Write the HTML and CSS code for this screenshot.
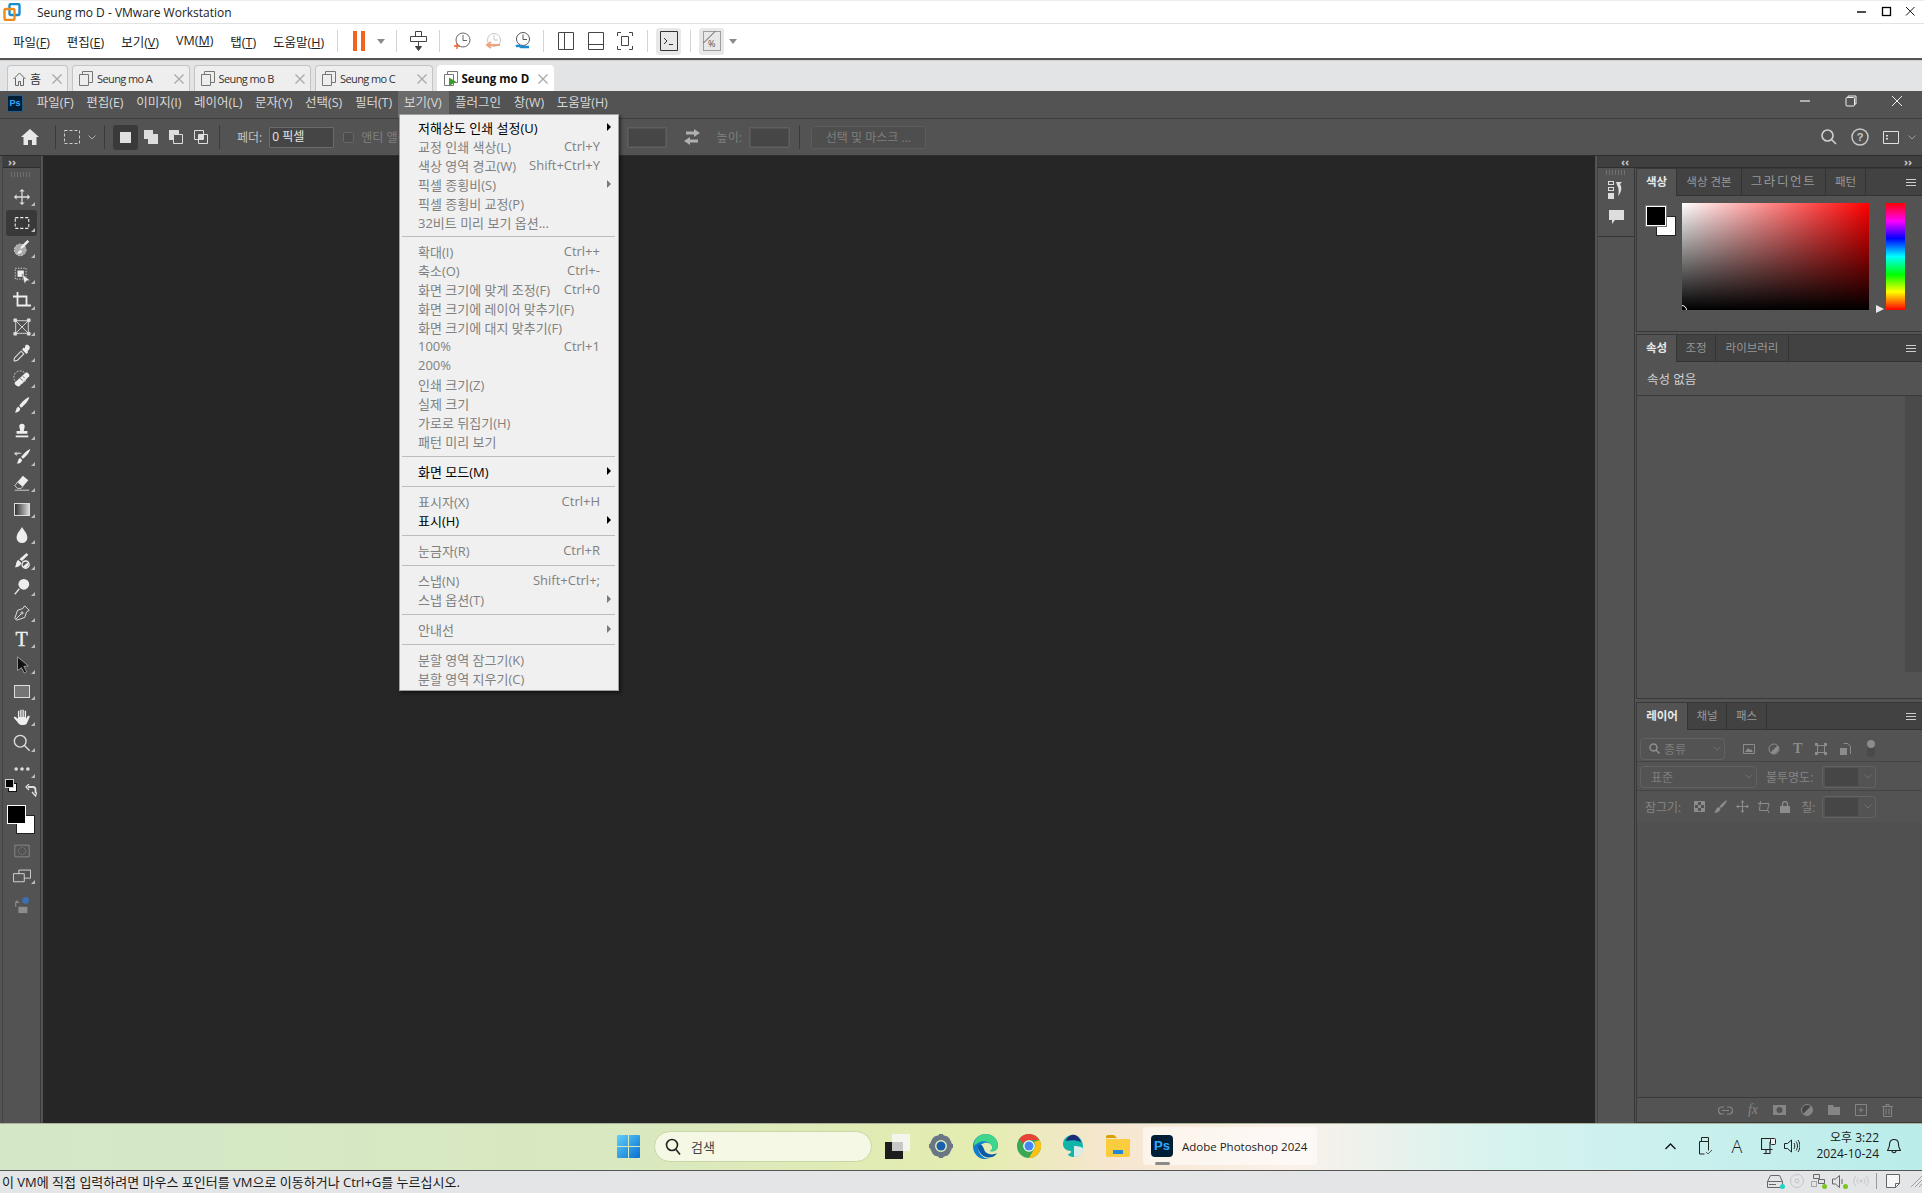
FILE: index.html
```html
<!DOCTYPE html>
<html lang="ko">
<head>
    <meta charset="UTF-8">
    <title>Seung mo D - VMware Workstation</title>
    <link rel="stylesheet" href="styles.css">
</head>
<body>
<div class="window">

    <!-- VMware chrome -->
    <div class="title-bar">
        <svg class="vm-logo" width="18" height="18" viewBox="0 0 18 18"><rect x="6.500" y="1" width="10" height="11" rx="1.500" fill="none" stroke="#1b8bd0" stroke-width="2.400"/><rect x="1.500" y="6" width="10" height="11" rx="1.500" fill="none" stroke="#ee8a1a" stroke-width="2.400"/></svg>
        <span class="title-text">Seung mo D - VMware Workstation</span>
        <div class="win-buttons">
            <svg width="12" height="12" viewBox="0 0 12 12"><path d="M0 6h9" stroke="#000" stroke-width="1.400"/></svg>
            <svg width="12" height="12" viewBox="0 0 12 12"><rect x="1.500" y="1.500" width="8" height="8" fill="none" stroke="#000" stroke-width="1.300"/></svg>
            <svg width="12" height="12" viewBox="0 0 12 12"><path d="M1 1l8.500 8.500M9.500 1L1 9.500" stroke="#111" stroke-width="1"/></svg>
        </div>
    </div>

    <div class="vm-toolbar">
        <div class="vm-menu">
            <span>파일(<u>F</u>)</span><span>편집(<u>E</u>)</span><span>보기(<u>V</u>)</span><span>VM(<u>M</u>)</span><span>탭(<u>T</u>)</span><span>도움말(<u>H</u>)</span>
        </div>
        <i class="vsep m13"></i>
        <svg class="m15" width="12" height="20" viewBox="0 0 12 20"><path d="M0 0h4v20H0zM8 0h4v20H8z" fill="#f0641e"/></svg>
        <svg class="m12" width="8" height="5" viewBox="0 0 8 5"><path d="M0 0h8L4 5z" fill="#8a8a8a"/></svg>
        <i class="vsep m11"></i>
        <svg class="m13" width="17" height="20" viewBox="0 0 17 20" fill="none" stroke="#444"><path d="M5.500 .5h6v5h-6zM.5 5.500h16v5H.5zM8.500 10.500v6"/><path d="M5.500 15.500h6l-3 4z" fill="#444"/></svg>
        <i class="vsep m12"></i>
        <svg class="m14" width="17" height="20" viewBox="0 0 17 20" fill="none" stroke="#666"><circle cx="9" cy="9" r="7"/><path d="M9 4v5.500h4"/><path d="M0 15h6M3 12v6" stroke="#e8622a" stroke-width="1.300"/></svg>
        <svg class="m14" width="16" height="20" viewBox="0 0 16 20" fill="none" stroke="#c8c8c8"><circle cx="9" cy="9" r="6.500"/><path d="M9 4v5h4"/><path d="M15 14H3M6 11l-4 3 4 3" stroke="#f2a27c" stroke-width="2"/></svg>
        <svg class="m14" width="16" height="20" viewBox="0 0 16 20" fill="none" stroke="#555"><circle cx="8" cy="8" r="6.500"/><path d="M8 3.500v5h4"/><path d="M1 15.500c3-2 4 0 5 .5h8" stroke="#1b8bd0" stroke-width="2.400"/></svg>
        <i class="vsep m12"></i>
        <svg class="m14" width="16" height="18" viewBox="0 0 16 18" fill="none" stroke="#444"><path d="M.5.500h15v17H.5zM6.500.5v17"/></svg>
        <svg class="m14" width="16" height="18" viewBox="0 0 16 18" fill="none" stroke="#444"><path d="M.5.500h15v17H.5zM.5 12.500h15"/></svg>
        <svg class="m13" width="16" height="18" viewBox="0 0 16 18" fill="none" stroke="#444"><path d="M4 .5H.5V4M12 .5h3.500V4M4 17.500H.5V14M12 17.500h3.500V14M4.500 4.500h7v9h-7z"/></svg>
        <i class="vsep m14"></i>
        <div class="vm-toggle m8"><svg width="18" height="20" viewBox="0 0 18 20" fill="none" stroke="#333"><path d="M.5.500h17v19H.5zM4 7l3 3-3 3M9 13.500h4"/></svg></div>
        <i class="vsep m9"></i>
        <div class="vm-toggle m8"><svg width="18" height="20" viewBox="0 0 18 20" fill="none" stroke="#555" stroke-dasharray="1 1"><path d="M.5.500h17v19H.5z"/><path d="M.5 12L12 .5" stroke-dasharray="none"/><text x="5" y="16" font-size="9" fill="#555" stroke="none">%</text></svg></div>
        <svg class="m5" width="8" height="5" viewBox="0 0 8 5"><path d="M0 0h8L4 5z" fill="#8a8a8a"/></svg>
    </div>

    <div class="tab-strip">
        <div class="tab tab-home">
            <svg width="13" height="14" viewBox="0 0 13 14" fill="none" stroke="#666"><path d="M.5 7L6.500 1l6 6M2.500 6v7.500h3v-4h2v4h3V6"/></svg>
            <span>홈</span><svg class="tab-x" width="10" height="10" viewBox="0 0 10 10"><path d="M.5.500l9 9M9.500.5l-9 9" stroke="#a8a8a8" stroke-width="1.300"/></svg>
        </div>
        <div class="tab">
            <svg width="14" height="15" viewBox="0 0 14 15" fill="none" stroke="#777"><path d="M3.500.5h10v11h-10z"/><path d="M.5 3.500h9v11h-9z" fill="#eee"/></svg>
            <span>Seung mo A</span><svg class="tab-x" width="10" height="10" viewBox="0 0 10 10"><path d="M.5.500l9 9M9.500.5l-9 9" stroke="#a8a8a8" stroke-width="1.300"/></svg>
        </div>
        <div class="tab">
            <svg width="14" height="15" viewBox="0 0 14 15" fill="none" stroke="#777"><path d="M3.500.5h10v11h-10z"/><path d="M.5 3.500h9v11h-9z" fill="#eee"/></svg>
            <span>Seung mo B</span><svg class="tab-x" width="10" height="10" viewBox="0 0 10 10"><path d="M.5.500l9 9M9.500.5l-9 9" stroke="#a8a8a8" stroke-width="1.300"/></svg>
        </div>
        <div class="tab">
            <svg width="14" height="15" viewBox="0 0 14 15" fill="none" stroke="#777"><path d="M3.500.5h10v11h-10z"/><path d="M.5 3.500h9v11h-9z" fill="#eee"/></svg>
            <span>Seung mo C</span><svg class="tab-x" width="10" height="10" viewBox="0 0 10 10"><path d="M.5.500l9 9M9.500.5l-9 9" stroke="#a8a8a8" stroke-width="1.300"/></svg>
        </div>
        <div class="tab tab-active">
            <svg width="14" height="15" viewBox="0 0 14 15" fill="none" stroke="#777"><path d="M3.500.5h10v11h-10z"/><path d="M.5 3.500h9v11h-9z" fill="#fff"/><path d="M5 6.500l7 4.250L5 15z" fill="#3a9a2a" stroke="none"/></svg>
            <span>Seung mo D</span><svg class="tab-x" width="10" height="10" viewBox="0 0 10 10"><path d="M.5.500l9 9M9.500.5l-9 9" stroke="#a8a8a8" stroke-width="1.300"/></svg>
        </div>
    </div>

    <!-- Photoshop inside the VM -->
    <div class="ps">
        <div class="ps-menu">
            <div class="ps-logo">Ps</div>
            <span>파일(F)</span><span>편집(E)</span><span>이미지(I)</span><span>레이어(L)</span><span>문자(Y)</span><span>선택(S)</span><span>필터(T)</span><span class="open">보기(V)</span><span>플러그인</span><span>창(W)</span><span>도움말(H)</span>
            <div class="ps-win">
                <svg width="12" height="12" viewBox="0 0 12 12"><path d="M1 6h10" stroke="#eee" stroke-width="1.200"/></svg>
                <svg width="12" height="12" viewBox="0 0 12 12" fill="none" stroke="#eee"><path d="M3 2.500V1h8v8H9.500"/><rect x="1" y="2.500" width="8.500" height="8.500" rx="1"/></svg>
                <svg width="12" height="12" viewBox="0 0 12 12"><path d="M1 1l10 10M11 1L1 11" stroke="#eee"/></svg>
            </div>
        </div>

        <div class="ps-options">
            <svg class="m21" width="18" height="16" viewBox="0 0 18 16"><path d="M9 0l9 8h-2.500v8H11v-5H7v5H2.500V8H0z" fill="#e8e8e8"/></svg>
            <i class="osep m16"></i>
            <svg class="m8" width="16" height="14" viewBox="0 0 16 14" fill="none" stroke="#ccc" stroke-dasharray="3 2"><rect x=".5" y=".5" width="15" height="13"/></svg>
            <svg class="m8" width="8" height="5" viewBox="0 0 8 5" fill="none" stroke="#aaa"><path d="M.5.500L4 4 7.500.5"/></svg>
            <i class="osep m8"></i>
            <div class="mode-on m8"><i class="mode-box"></i></div>
            <svg class="m6" width="14" height="14" viewBox="0 0 14 14" fill="#ddd"><path d="M0 0h9v4h5v10H4v-5H0z"/></svg>
            <svg class="m11" width="14" height="14" viewBox="0 0 14 14"><path d="M0 0h10v4H4v6H0z" fill="#ddd"/><path d="M4.500 4.500h9v9h-9z" fill="none" stroke="#ddd"/></svg>
            <svg class="m11" width="14" height="14" viewBox="0 0 14 14" fill="none" stroke="#ddd"><path d="M.5.500h9v9h-9z"/><path d="M4.500 4.500h9v9h-9z"/><path d="M5 5h4v4H5z" fill="#ddd" stroke="none"/></svg>
            <i class="osep m11"></i>
            <span class="opt-label opt-feather">페더:</span>
            <div class="opt-input on m7">0 픽셀</div>
            <i class="check m9"></i>
            <span class="opt-label dim m7">앤티 앨리어스</span>
            <div class="opt-input off opt-w"></div>
            <svg class="m16" width="18" height="16" viewBox="0 0 18 16" fill="#b0b0b0"><path d="M11 0l6 4-6 4V5.500H3v-3h8zM7 8v2.500h8v3H7V16l-6-4z"/></svg>
            <span class="opt-label dim m16">높이:</span>
            <div class="opt-input off opt-h m7"></div>
            <i class="osep m9"></i>
            <div class="mask-btn m11">선택 및 마스크 ...</div>
            <div class="opt-right">
                <svg width="16" height="16" viewBox="0 0 16 16" fill="none" stroke="#d0d0d0" stroke-width="1.600"><circle cx="6.500" cy="6.500" r="5.500"/><path d="M10.500 10.500L15 15"/></svg>
                <svg width="18" height="18" viewBox="0 0 18 18" fill="none" stroke="#c8c8c8" stroke-width="1.500"><circle cx="9" cy="9" r="8"/><text x="9" y="13" font-family="Liberation Sans" font-weight="bold" font-size="11" text-anchor="middle" fill="#c8c8c8" stroke="none">?</text></svg>
                <svg width="16" height="13" viewBox="0 0 16 13" fill="none" stroke="#e0e0e0"><path d="M.5.500h15v12H.5z"/><path d="M3 4h2v1.500H3zM3 7h2v1.500H3z" fill="#e0e0e0" stroke="none"/></svg>
                <svg class="opt-chevron" width="8" height="5" viewBox="0 0 8 5" fill="none" stroke="#a0a0a0"><path d="M.5.500L4 4 7.500.5"/></svg>
            </div>
        </div>

        <div class="ps-main">
            <!-- tools -->
            <div class="tools">
                <div class="collapse-strip left"><span>››</span></div>
                <div class="grip"></div>
                <div class="tool-list">
                    <div class="tool more"><svg viewBox="0 0 20 20" fill="#ddd"><path d="M10 1l3 3h-2.300v5.300H16V7l3 3-3 3v-2.300h-5.300V16H13l-3 3-3-3h2.300v-5.300H4V13l-3-3 3-3v2.300h5.300V4H7z"/></svg></div>
                    <div class="tool more selected"><svg viewBox="0 0 20 20" fill="none" stroke="#eee" stroke-width="1.200" stroke-dasharray="3.500 2"><rect x="2.500" y="4" width="15" height="12"/></svg></div>
                    <div class="tool more"><svg viewBox="0 0 20 20"><circle cx="8" cy="11" r="6.500" fill="#aaa" stroke="#ddd" stroke-dasharray="2 1.500"/><path d="M18 2l-7 7-3 1 1-3 7-7z M8 11c-2 1-2 3-4 4 3 1 6 0 6-3z" fill="#eee"/></svg></div>
                    <div class="tool more"><svg viewBox="0 0 20 20"><rect x="2.500" y="2.500" width="12" height="12" fill="none" stroke="#ddd" stroke-dasharray="1.500 1.500"/><path d="M5 5h7v7H5z" fill="#eee"/><path d="M10 9l9 7-4 .500-2 3.500z" fill="#eee" stroke="#555" stroke-width=".6"/></svg></div>
                    <div class="tool more"><svg viewBox="0 0 20 20" fill="none" stroke="#eee" stroke-width="2"><path d="M0 5h15v11M5 0v15h15"/></svg></div>
                    <div class="tool more"><svg viewBox="0 0 20 20" fill="none" stroke="#ddd"><path d="M3 3h14v14H3zM3 3l14 14M17 3L3 17"/><path d="M1 1h3v3H1zM16 1h3v3h-3zM1 16h3v3H1zM16 16h3v3h-3z" fill="#ddd"/></svg></div>
                    <div class="tool more"><svg viewBox="0 0 20 20"><path d="M14 1c3-1 6 2 4 5l-2 2 1 1-2 2-5-5 2-2 1 1z" fill="#eee"/><path d="M9 8l3 3-7 7-3 1-1-1 1-3z" fill="none" stroke="#ddd" stroke-width="1.200"/></svg></div>
                    <div class="tool more"><svg viewBox="0 0 20 20"><circle cx="8" cy="8" r="7" fill="none" stroke="#ddd" stroke-dasharray="2 1.500"/><path d="M2 14L14 3c2-1 5 2 4 4L7 18c-2 1-6-2-5-4z" fill="#eee"/><path d="M8 9l3 3M11 7l2 2" stroke="#666"/></svg></div>
                    <div class="tool more"><svg viewBox="0 0 20 20" fill="#eee"><path d="M18 1c0 3-5 9-9 12l-2-2C9 7 15 2 18 1zM6 12l2 2c0 3-3 5-6 4 2-1 1-5 4-6z"/></svg></div>
                    <div class="tool more"><svg viewBox="0 0 20 20" fill="#eee"><path d="M7 5a3 3 0 116 0c0 2-1 3-1 5h4v3H4v-3h4c0-2-1-3-1-5z"/><path d="M3 15h14v2H3z"/></svg></div>
                    <div class="tool more"><svg viewBox="0 0 20 20" fill="#eee"><path d="M19 1c0 3-4 8-8 11l-2-2C12 6 16 2 19 1zM8 11l2 2c0 3-3 5-6 4 2-1 1-5 4-6z"/><path d="M1 6l3-2v1.500c3-1 5 0 6 1-2 0-4 0-6 1V9z" fill="#ccc"/></svg></div>
                    <div class="tool more"><svg viewBox="0 0 20 20"><path d="M11 2l6 5-6 7-6-5z" fill="#eee"/><path d="M5 9l6 5-2 2H5l-3-3zM2 18h16" fill="none" stroke="#ddd"/></svg></div>
                    <div class="tool more"><i class="gradient-swatch"></i></div>
                    <div class="tool more"><svg viewBox="0 0 20 20" fill="#eee"><path d="M10 1c2 4 6 7 6 12a6 6 0 01-12 0c0-5 4-8 6-12z"/></svg></div>
                    <div class="tool more"><svg viewBox="0 0 20 20"><path d="M15 1l2 2-7 7-3-2zM6 9l3 3c0 3-3 5-7 5 2-2 1-7 4-8z" fill="#eee"/><circle cx="14" cy="14" r="4" fill="none" stroke="#eee" stroke-width="1.500"/><path d="M11 16l6-5 0 4-3 3z" fill="#eee"/></svg></div>
                    <div class="tool more"><svg viewBox="0 0 20 20"><circle cx="12" cy="7" r="6" fill="#eee"/><path d="M7 12l-5 6" stroke="#ddd" stroke-width="1.600"/></svg></div>
                    <div class="tool more"><svg viewBox="0 0 20 20" fill="none" stroke="#ddd" stroke-width="1.100"><path d="M13 2l5 5-3 2-2 6-9 3-2-2 3-9 6-2z"/><path d="M3 17l6-6"/><circle cx="10" cy="10" r="1.200"/></svg></div>
                    <div class="tool more"><span class="type-t">T</span></div>
                    <div class="tool more"><svg viewBox="0 0 20 20"><path d="M5 1l12 10-5 .500 3 6-2.500 1.500-3-6L5 16z" fill="#111" stroke="#ccc" stroke-width=".7"/></svg></div>
                    <div class="tool more"><i class="rect-swatch"></i></div>
                    <div class="tool more"><svg viewBox="0 0 20 20" fill="#eee"><path d="M6 3h1v7h1V2h1.500v8h1V2H12v8h1V3h1.500v9l2-3c1-1 2.500 0 2 1l-3 7c-1 2-3 2-5 2-3 0-4-1-6-4L1 11c-.500-1 1-2 2-1l2.500 2V4z"/></svg></div>
                    <div class="tool more"><svg viewBox="0 0 20 20" fill="none" stroke="#ddd" stroke-width="1.500"><circle cx="8" cy="8" r="6.500"/><path d="M12.500 12.500l6 6"/></svg></div>
                    <div class="tool more"><svg viewBox="0 0 20 20" fill="#ddd"><circle cx="3.500" cy="10" r="2"/><circle cx="10" cy="10" r="2"/><circle cx="16.500" cy="10" r="2"/></svg></div>
                </div>

                <div class="swatches">
                    <i class="mini-bg"></i><i class="mini-fg"></i>
                    <svg class="swap" width="12" height="13" viewBox="0 0 12 13" fill="none" stroke="#e0e0e0" stroke-width="1.800"><path d="M3 3h5c2 0 2.500 1 2.500 3v3"/><path d="M4 0L1 3l3 3M7 8l3.500 4L12 8" stroke-width="1.300"/></svg>
                    <i class="big-bg"></i><i class="big-fg"></i>
                </div>

                <div class="tool"><svg viewBox="0 0 20 20" fill="none" stroke="#8c8c8c"><path d="M2 3.500h16v13H2z"/><circle cx="10" cy="10" r="4" stroke-dasharray="1.500 1.500"/></svg></div>
                <div class="tool more tool-screen"><svg viewBox="0 0 20 20" fill="none" stroke="#ddd"><path d="M6.500 4.500h13v9h-13z"/><path d="M.5 8.500h12v9H.5z" fill="#555"/></svg></div>
                <div class="tool tool-last"><svg viewBox="0 0 20 20"><path d="M7 7H3v5M3 7l2-2" fill="none" stroke="#8c8c8c" stroke-width="1.300"/><rect x="6" y="12" width="10" height="7" fill="#8c8c8c"/><circle cx="14" cy="5" r="3.800" fill="#3d6eb0"/></svg></div>
            </div>

            <div class="canvas"></div>

            <!-- right dock -->
            <div class="dock">
                <div class="collapse-strip"><span>‹‹</span><span>››</span></div>
                <div class="dock-body">
                    <div class="icon-col">
                        <div class="icon-box">
                            <div class="grip short"></div>
                            <svg class="ib-first" width="16" height="18" viewBox="0 0 16 18" fill="#ddd"><path d="M0 0h6v4H0zM0 6h6v4H0zM0 12h6v6H0z"/><path d="M1 1h4v2H1zM1 7h4v2H1z" fill="#555"/><path d="M8 1h6l-2 2c2 3 2 8-2 12 1-4 1-8-1-11z"/></svg>
                            <svg class="ib-second" width="15" height="15" viewBox="0 0 15 15" fill="#ddd"><path d="M0 0h15v10H6l-3 4v-4H0z"/></svg>
                        </div>
                    </div>
                    <div class="panels">
                        <section class="panel panel-color">
                            <div class="panel-tabs">
                                <span class="active t-40">색상</span><span class="t-65">색상 견본</span><span class="t-84 wide">그라디언트</span><span class="t-40">패턴</span>
                                <i class="burger"></i>
                            </div>
                            <div class="color-body">
                                <div class="fg-bg"><i class="c-bg"></i><i class="c-fg"></i></div>
                                <div class="color-field"><i class="field-mark"></i></div>
                                <div class="hue-wrap"><i class="hue-mark"></i><div class="hue"></div></div>
                            </div>
                        </section>
                        <section class="panel panel-props">
                            <div class="panel-tabs">
                                <span class="active t-40">속성</span><span class="t-39">조정</span><span class="t-73">라이브러리</span>
                                <i class="burger"></i>
                            </div>
                            <div class="props-head">속성 없음</div>
                            <div class="props-body"><div class="scroll-track"></div></div>
                        </section>
                        <section class="panel panel-layers">
                            <div class="panel-tabs">
                                <span class="active t-51">레이어</span><span class="t-39">채널</span><span class="t-40">패스</span>
                                <i class="burger"></i>
                            </div>
                            <div class="layer-row row-filter">
                                <div class="sel sel-kind">
                                    <svg width="11" height="11" viewBox="0 0 11 11" fill="none" stroke="#909090" stroke-width="1.500"><circle cx="4.500" cy="4.500" r="3.500"/><path d="M7 7l3.500 3.500"/></svg>
                                    <span>종류</span>
                                    <svg class="sel-arrow" width="8" height="5" viewBox="0 0 8 5" fill="none" stroke="#6e6e6e"><path d="M.5.500L4 4 7.500.5"/></svg>
                                </div>
                                <div class="filter-icons">
                                    <svg width="12" height="10" viewBox="0 0 12 10"><path d="M.5.500h11v9H.5z" fill="none" stroke="#8c8c8c"/><path d="M2 8l3-4 2 2 1-1 2 3z" fill="#8c8c8c"/></svg>
                                    <svg width="12" height="12" viewBox="0 0 12 12"><circle cx="6" cy="6" r="5" fill="none" stroke="#8c8c8c"/><path d="M9.500 2.500a5 5 0 01-7 7z" fill="#8c8c8c"/></svg>
                                    <span class="type-t small">T</span>
                                    <svg width="12" height="12" viewBox="0 0 12 12" fill="#8c8c8c"><path d="M2 2.500h8M2 9.500h8M2.500 2v8M9.500 2v8" stroke="#8c8c8c" fill="none"/><path d="M0 0h3v3H0zM9 0h3v3H9zM0 9h3v3H0zM9 9h3v3H9z"/></svg>
                                    <svg width="11" height="12" viewBox="0 0 11 12"><path d="M3.500.5H8l2.500 3V11" fill="none" stroke="#8c8c8c"/><path d="M0 5h7v7H0z" fill="#8c8c8c"/></svg>
                                    <div class="filter-toggle"><i></i></div>
                                </div>
                            </div>
                            <div class="layer-row row-blend">
                                <div class="sel sel-blend">
                                    <span>표준</span>
                                    <svg class="sel-arrow" width="8" height="5" viewBox="0 0 8 5" fill="none" stroke="#6e6e6e"><path d="M.5.500L4 4 7.500.5"/></svg>
                                </div>
                                <span class="layer-label opacity-label">불투명도:</span>
                                <div class="num-input"><i></i><svg width="8" height="5" viewBox="0 0 8 5" fill="none" stroke="#6e6e6e"><path d="M.5.500L4 4 7.500.5"/></svg></div>
                            </div>
                            <div class="layer-row row-lock">
                                <span class="layer-label lock-label">잠그기:</span>
                                <div class="lock-icons">
                                    <svg width="11" height="11" viewBox="0 0 11 11"><path d="M.5.500h10v10H.5z" fill="none" stroke="#8c8c8c"/><path d="M1 1h3v3H1zM7 1h3v3H7zM4 4h3v3H4zM1 7h3v3H1zM7 7h3v3H7z" fill="#8c8c8c"/></svg>
                                    <svg width="13" height="13" viewBox="0 0 13 13" fill="#8c8c8c"><path d="M13 0c0 2-3 6-6 8L5.500 6.500C8 3.500 11 1 13 0zM5 7l1.500 1.500C6.500 11 3 13 0 13c2-1 1-5 5-6z"/></svg>
                                    <svg width="13" height="13" viewBox="0 0 13 13" fill="#8c8c8c"><path d="M6.500 0l2 2.500h-1.500V6h3.500V4.500L13 6.500l-2.500 2V7h-3.500v3.500h1.500L6.500 13l-2-2.500H6V7H2.500v1.500L0 6.500l2.500-2V6H6V2.500H4.500z"/></svg>
                                    <svg width="13" height="12" viewBox="0 0 13 12" fill="none" stroke="#8c8c8c"><path d="M0 2.500h11L9.500 9.500H1.500L2.500 0M10 9.500l1 2.500"/></svg>
                                    <svg width="10" height="12" viewBox="0 0 10 12" fill="#8c8c8c"><path d="M0 5h10v7H0z"/><path d="M2.500 5V3a2.500 2.500 0 015 0v2" fill="none" stroke="#8c8c8c" stroke-width="1.300"/></svg>
                                </div>
                                <span class="layer-label fill-label">칠:</span>
                                <div class="num-input"><i></i><svg width="8" height="5" viewBox="0 0 8 5" fill="none" stroke="#6e6e6e"><path d="M.5.500L4 4 7.500.5"/></svg></div>
                            </div>
                            <div class="layer-list"></div>
                            <div class="layer-foot">
                                <svg width="15" height="9" viewBox="0 0 15 9" fill="none" stroke="#858585" stroke-width="1.200"><path d="M6 1H4a3.500 3.500 0 000 7h2M9 1h2a3.500 3.500 0 010 7H9M4 4.500h7"/></svg>
                                <span class="fx">fx</span>
                                <svg width="13" height="10" viewBox="0 0 13 10"><path fill-rule="evenodd" d="M0 0h13v10H0zM6.500 2a3 3 0 100 6 3 3 0 000-6z" fill="#858585"/></svg>
                                <svg width="12" height="12" viewBox="0 0 12 12"><circle cx="6" cy="6" r="5.500" fill="#454545" stroke="#858585"/><path d="M10 2a5.500 5.500 0 01-8 8z" fill="#858585"/></svg>
                                <svg width="12" height="10" viewBox="0 0 12 10" fill="#858585"><path d="M0 0h5l1 2h6v8H0z"/></svg>
                                <svg width="12" height="12" viewBox="0 0 12 12" fill="none" stroke="#858585"><path d="M.5.500h11v11H.5zM6 3.500v5M3.500 6h5"/></svg>
                                <svg width="11" height="13" viewBox="0 0 11 13" fill="none" stroke="#858585"><path d="M0 2.500h11M4 2.500V.5h3v2M1.500 2.500v10h8v-10M4 4.500v6M7 4.500v6"/></svg>
                            </div>
                        </section>
                    </div>
                </div>
            </div>
        </div>

        <!-- 보기 dropdown -->
        <div class="view-menu">
            <div class="mi on sub"><span>저해상도 인쇄 설정(U)</span></div>
            <div class="mi"><span>교정 인쇄 색상(L)</span><kbd>Ctrl+Y</kbd></div>
            <div class="mi"><span>색상 영역 경고(W)</span><kbd>Shift+Ctrl+Y</kbd></div>
            <div class="mi sub"><span>픽셀 종횡비(S)</span></div>
            <div class="mi"><span>픽셀 종횡비 교정(P)</span></div>
            <div class="mi"><span>32비트 미리 보기 옵션...</span></div>
            <hr class="first">
            <div class="mi"><span>확대(I)</span><kbd>Ctrl++</kbd></div>
            <div class="mi"><span>축소(O)</span><kbd>Ctrl+-</kbd></div>
            <div class="mi"><span>화면 크기에 맞게 조정(F)</span><kbd>Ctrl+0</kbd></div>
            <div class="mi"><span>화면 크기에 레이어 맞추기(F)</span></div>
            <div class="mi"><span>화면 크기에 대지 맞추기(F)</span></div>
            <div class="mi"><span>100%</span><kbd>Ctrl+1</kbd></div>
            <div class="mi"><span>200%</span></div>
            <div class="mi"><span>인쇄 크기(Z)</span></div>
            <div class="mi"><span>실제 크기</span></div>
            <div class="mi"><span>가로로 뒤집기(H)</span></div>
            <div class="mi"><span>패턴 미리 보기</span></div>
            <hr>
            <div class="mi on sub"><span>화면 모드(M)</span></div>
            <hr>
            <div class="mi"><span>표시자(X)</span><kbd>Ctrl+H</kbd></div>
            <div class="mi on sub"><span>표시(H)</span></div>
            <hr>
            <div class="mi"><span>눈금자(R)</span><kbd>Ctrl+R</kbd></div>
            <hr>
            <div class="mi"><span>스냅(N)</span><kbd>Shift+Ctrl+;</kbd></div>
            <div class="mi sub"><span>스냅 옵션(T)</span></div>
            <hr>
            <div class="mi sub"><span>안내선</span></div>
            <hr>
            <div class="mi"><span>분할 영역 잠그기(K)</span></div>
            <div class="mi"><span>분할 영역 지우기(C)</span></div>
        </div>
    </div>

    <!-- Windows taskbar -->
    <div class="taskbar">
        <svg class="start" width="23" height="23" viewBox="0 0 23 23"><defs><linearGradient id="winblue" x1="0" y1="0" x2="1" y2="1"><stop offset="0" stop-color="#5ed0fb"/><stop offset="1" stop-color="#0a6fd0"/></linearGradient></defs><path d="M1 0h10v11H0V1a1 1 0 011-1zM12 0h10a1 1 0 011 1v10H12zM0 12h11v11H1a1 1 0 01-1-1zM12 12h11v10a1 1 0 01-1 1H12z" fill="url(#winblue)"/></svg>
        <div class="search">
            <svg width="16" height="17" viewBox="0 0 16 17" fill="none" stroke="#222" stroke-width="1.600"><circle cx="7" cy="7" r="5.500"/><path d="M11 11.500l4 5"/></svg>
            <span>검색</span>
        </div>
        <svg class="tb-task" width="25" height="25" viewBox="0 0 25 25"><rect x="0" y="8" width="18" height="17" fill="#1c1c1c"/><rect x="7" y="0" width="18" height="17" fill="#f4f6ee"/><rect x="7" y="8" width="11" height="9" fill="#c8c8c8"/></svg>
        <svg class="tb-gear" width="24" height="24" viewBox="0 0 24 24"><circle cx="12" cy="12" r="8.500" fill="none" stroke="#6a7684" stroke-width="5"/><path d="M10 0h4l1 4h-6zM10 24h4l1-4H9zM0 10v4l4 1V9zM24 10v4l-4 1V9zM3 5l3-3 3 3-4 4zM21 5l-3-3-3 3 4 4zM3 19l3 3 3-3-4-4zM21 19l-3 3-3-3 4-4z" fill="#6a7684"/><circle cx="12" cy="12" r="4.500" fill="#1a5fb0"/></svg>
        <svg class="tb-edge" width="25" height="25" viewBox="0 0 25 25"><path d="M12.500 0C20 0 25 5 25 12c0 4-4 6-8 5 2-1 3-3 2-5-1-3-5-4-8-3C5 11 4 17 8 21c2 2 5 4 8 3.500C9 27 0 22 0 12 0 5 6 0 12.500 0z" fill="#0f7ed0"/><path d="M1 9C3 3 8 0 12.500 0 20 0 25 5 25 12c0 4-4 6-8 5 2-1 3-3 2-5-2-4-8-6-12-4-3 1-5 3-6 4z" fill="#3dd68a"/><path d="M5 12c0 7 6 13 14 11 2-.500 4-2 5-4-5 3-12 1-13-4-1-3-3-6-6-3z" fill="#0a5aa8"/></svg>
        <svg class="tb-chrome" width="24" height="24" viewBox="0 0 24 24"><circle cx="12" cy="12" r="12" fill="#3aa757"/><path d="M12 0a12 12 0 0110.400 6H12a6 6 0 00-5.600 4L2.300 5A12 12 0 0112 0z" fill="#ea4335"/><path d="M22.400 6A12 12 0 0112 24l5.200-9A6 6 0 0017 8z" fill="#fbc116"/><circle cx="12" cy="12" r="5.800" fill="#fff"/><circle cx="12" cy="12" r="4.500" fill="#4285f4"/></svg>
        <svg class="tb-whale" width="22" height="24" viewBox="0 0 22 24"><path d="M11 1c6 0 10 5 10 12 0 6-4 10-9 10-3 0-6-1-6-3 2 0 3-1 3-3-5 0-8-3-8-7C1 5 5 1 11 1z" fill="#12b3a8"/><path d="M4 7c1-4 5-7 9-6 3 1 5 4 6 7-5-2-10-2-15-1z" fill="#1c2c78"/><path d="M12 12c5 0 9 1 9 3 0 5-4 8-9 8z" fill="#d9ece8"/></svg>
        <svg class="tb-folder" width="24" height="22" viewBox="0 0 24 22"><path d="M0 2a2 2 0 012-2h6l3 3h-11z" fill="#d9a100"/><path d="M0 4h24v16a2 2 0 01-2 2H2a2 2 0 01-2-2z" fill="#fbcc3e"/><path d="M7 15h10v4H7z" fill="#1e88d8"/></svg>
        <div class="tb-app">
            <div class="ps-big">Ps</div>
            <span>Adobe Photoshop 2024</span>
            <i class="running"></i>
        </div>
        <div class="tray">
            <svg width="11" height="7" viewBox="0 0 11 7" fill="none" stroke="#111" stroke-width="1.300"><path d="M.5 6l5-5 5 5"/></svg>
            <svg class="tray-usb" width="14" height="18" viewBox="0 0 14 18" fill="none" stroke="#222"><path d="M3.500.5h7v4h-7zM1.500 4.500h9v9M1.500 4.500v12.500h5"/><path d="M8 15l2 2 4-4" stroke="#555"/></svg>
            <span class="tray-a">A</span>
            <svg class="tray-mon" width="17" height="16" viewBox="0 0 17 16" fill="none" stroke="#222"><path d="M12 .5H.5v11h11M5 11.500v4M2.500 15.500h6M9 4v12" stroke-width="1.100"/><rect x="9.500" y=".5" width="5" height="6" rx="1" fill="#eee"/></svg>
            <svg class="tray-vol" width="16" height="14" viewBox="0 0 16 14" fill="none" stroke="#222"><path d="M.5 4.500h3l4-3.500v12l-4-3.500h-3zM10 4c1 2 1 4 0 6M12 2.500c2 3 2 6 0 9M14 1c2.500 4 2.500 8 0 12"/></svg>
            <div class="clock"><span>오후 3:22</span><span>2024-10-24</span></div>
            <svg class="tray-bell" width="14" height="15" viewBox="0 0 14 15" fill="none" stroke="#222" stroke-width="1.100"><path d="M7 .5c3 0 4.500 2 4.500 5s1 4 2 6H.5c1-2 2-3 2-6s1.500-5 4.500-5zM5 11.500c0 3 4 3 4 0"/></svg>
        </div>
    </div>

    <div class="status-bar">
        <span>이 VM에 직접 입력하려면 마우스 포인터를 VM으로 이동하거나 Ctrl+G를 누르십시오.</span>
        <div class="status-icons">
            <div class="st-icon"><svg width="16" height="13" viewBox="0 0 16 13" fill="none" stroke="#666"><path d="M3.500.5h9l3 6v6H.5v-6zM.5 6.500h15M2 9.500h7"/></svg><i class="dot teal"></i></div>
            <svg width="14" height="14" viewBox="0 0 14 14" fill="none" stroke="#c4c4c4"><circle cx="7" cy="7" r="6.500"/><circle cx="7" cy="7" r="2"/></svg>
            <div class="st-icon"><svg width="14" height="14" viewBox="0 0 14 14" fill="none" stroke="#666"><path d="M2.500.5h6v4h-6zM7.500 5.500h6v4h-6z"/><path d="M.5 7.500h5v5h-5z" stroke-dasharray="1 1"/></svg><i class="dot green"></i></div>
            <div class="st-icon"><svg width="14" height="13" viewBox="0 0 14 13" fill="none" stroke="#666"><path d="M.5 4h3l4-3.500v12l-4-3.500h-3zM10 4v5"/></svg><i class="dot green"></i></div>
            <svg width="16" height="12" viewBox="0 0 16 12" fill="none" stroke="#c4c4c4"><path d="M3 1c-3 3-3 7 0 10M13 1c3 3 3 7 0 10M5.500 3c-2 2-2 4 0 6M10.500 3c2 2 2 4 0 6"/><circle cx="8" cy="6" r="1" fill="#c4c4c4"/></svg>
            <i class="st-sep"></i>
            <svg class="st-note" width="14" height="14" viewBox="0 0 14 14" fill="#f7f7f7" stroke="#666"><path d="M.5.500h13v9l-4 4h-9zM9.500 13.500v-4h4"/></svg>
            <svg class="grip-corner" width="11" height="11" viewBox="0 0 11 11" stroke="#a0a0a0" fill="none"><path d="M0 11L11 0M4 11l7-7M8 11l3-3"/></svg>
        </div>
    </div>
</div>
</body>
</html>
```
FILE: styles.css
```css
* {
    box-sizing: border-box;
}

body {
    margin: 0;
    background: #fff;
    font-family: "Open Sans", "Noto Sans CJK KR", sans-serif;
    font-size: 12px;
    color: #1a1a1a;
}

svg {
    display: block;
    flex: none;
}

.window {
    width: 1924px;
    height: 1193px;
    display: flex;
    flex-direction: column;
    overflow: hidden;
}

/* spacing helpers */
.m5 { margin-left: 5px; }
.m6 { margin-left: 6px; }
.m7 { margin-left: 7px; }
.m8 { margin-left: 8px; }
.m9 { margin-left: 9px; }
.m11 { margin-left: 11px; }
.m12 { margin-left: 12px; }
.m13 { margin-left: 13px; }
.m14 { margin-left: 14px; }
.m15 { margin-left: 15px; }
.m16 { margin-left: 16px; }
.m21 { margin-left: 21px; }

/* ---- VMware ---- */
.title-bar {
    height: 24px;
    flex: none;
    display: flex;
    align-items: center;
    border-top: 1px solid #ececec;
    border-bottom: 1px solid #e2e2e2;
    padding-left: 3px;
    padding-right: 2px;
}

.title-text {
    margin-left: 16px;
    font-size: 12px;
    color: #222;
}

.win-buttons {
    margin-left: auto;
    display: flex;
    gap: 12px;
    padding-right: 5px;
}

.vm-toolbar {
    height: 34px;
    flex: none;
    display: flex;
    align-items: center;
    padding-left: 13px;
}

.vm-menu {
    display: flex;
    gap: 17px;
    font-size: 12.5px;
    color: #222;
}

.vsep {
    width: 1px;
    height: 22px;
    background: #d4d4d4;
    flex: none;
}

.vm-toggle {
    width: 25px;
    height: 27px;
    background: #e8e8e8;
    border-radius: 3px;
    display: flex;
    align-items: center;
    justify-content: center;
}

.tab-strip {
    height: 33px;
    flex: none;
    display: flex;
    align-items: flex-end;
    gap: 4px;
    padding-left: 7px;
    margin-right: 2px;
    background: #e3e4e6;
    border-top: 2px solid #555;
    box-shadow: inset 0 1px 0 #d0d0d0;
}

.tab {
    width: 117.5px;
    height: 26px;
    display: flex;
    align-items: center;
    gap: 4px;
    padding-left: 6px;
    background: #eeeeee;
    border: 1px solid #c4c4c4;
    border-bottom: 0;
    border-radius: 4px 4px 0 0;
    font-size: 11px;
    letter-spacing: -0.6px;
    color: #333;
}

.tab-home {
    width: 61px;
    padding-left: 5px;
    font-size: 12px;
    letter-spacing: 0;
}

.tab-active {
    background: #fff;
    border-color: #fff;
    font-size: 11.5px;
    font-weight: 700;
    letter-spacing: 0;
    color: #111;
}

.tab-x {
    margin-left: auto;
    margin-right: 5px;
}

/* ---- Photoshop ---- */
.ps {
    height: 1032px;
    flex: none;
    position: relative;
    display: flex;
    flex-direction: column;
    margin-right: 2px;
    background: #535353;
    color: #d8d8d8;
}

.ps-menu {
    height: 28px;
    flex: none;
    display: flex;
    align-items: flex-start;
    padding-left: 7px;
    border-bottom: 1px solid #3d3d3d;
    font-size: 12.5px;
}

.ps-menu > span {
    height: 27px;
    line-height: 24px;
    padding: 0 6.3px;
}

.ps-menu > span:nth-of-type(1) {
    margin-left: 7.5px;
}

.ps-menu .open {
    background: #6b6b6b;
    padding: 0 7px 0 5.5px;
}

.ps-logo {
    width: 16px;
    height: 17px;
    margin-top: 4px;
    background: #001e36;
    color: #31a8ff;
    border-radius: 2px;
    border: 1px solid #2a5d86;
    font-family: "Liberation Sans", sans-serif;
    font-weight: 700;
    font-size: 9px;
    line-height: 15px;
    text-align: center;
}

.ps-win {
    margin-left: auto;
    margin-top: 4px;
    display: flex;
    gap: 34px;
    padding-right: 19px;
}

.ps-options {
    height: 37px;
    flex: none;
    display: flex;
    align-items: center;
    border-bottom: 1px solid #2e2e2e;
    color: #c4c4c4;
}

.osep {
    width: 1px;
    height: 24px;
    background: #3b3b3b;
    flex: none;
}

.mode-on {
    width: 25px;
    height: 25px;
    background: #3a3a3a;
    border-radius: 3px;
    display: flex;
    align-items: center;
    justify-content: center;
}

.mode-box {
    width: 11px;
    height: 11px;
    background: #e0e0e0;
}

.opt-feather {
    margin-left: 17px;
}

.opt-label.dim {
    color: #808080;
}

.opt-label {
    white-space: nowrap;
}

.opt-input {
    height: 21px;
    border: 1px solid #6a6a6a;
    border-radius: 1px;
    flex: none;
}

.opt-input.on {
    width: 65px;
    padding-left: 2px;
    line-height: 18px;
    background: #454545;
    color: #e6e6e6;
}

.opt-input.off {
    background: #464646;
    border: 2px solid #535353;
    outline: 1px solid #5f5f5f;
    outline-offset: -1px;
}

.opt-w {
    width: 40px;
    margin-left: 196px;
}

.opt-h {
    width: 41px;
}

.check {
    width: 11px;
    height: 11px;
    flex: none;
    border: 1px solid #676767;
    border-radius: 2px;
    background: #4c4c4c;
}

.mask-btn {
    width: 115px;
    height: 23px;
    flex: none;
    text-align: center;
    line-height: 21px;
    color: #7e7e7e;
    background: #4e4e4e;
    border: 1px solid #5c5c5c;
    border-radius: 3px;
}

.opt-right {
    margin-left: auto;
    display: flex;
    align-items: center;
    gap: 14px;
    padding-right: 6px;
}

.opt-chevron {
    margin-left: -5px;
}

.ps-main {
    flex: 1;
    display: flex;
    min-height: 0;
}

/* tools */
.tools {
    width: 39px;
    margin-left: 2px;
    flex: none;
    border-left: 1px solid #444;
    border-right: 1px solid #3a3a3a;
}

.collapse-strip {
    height: 12px;
    background: #3f3f3f;
    border-bottom: 1px solid #2e2e2e;
    display: flex;
    justify-content: space-between;
    align-items: center;
    padding: 0 10px 0 24px;
    font-size: 11px;
    line-height: 10px;
    color: #c8c8c8;
    font-weight: 700;
}

.collapse-strip.left {
    padding: 0 0 0 5px;
}

.grip {
    height: 16px;
    margin: 0 8px;
    background: repeating-linear-gradient(90deg, #707070 0 1px, transparent 1px 3px) center 4px / 100% 5px no-repeat;
}

.grip.short {
    width: 20px;
    margin: 0;
    height: 12px;
    background-position: center 2px;
}

.tool {
    height: 26px;
    position: relative;
    display: flex;
    align-items: center;
    justify-content: center;
}

.tool svg {
    width: 18px;
    height: 18px;
}

.tool.more::after {
    content: "";
    position: absolute;
    right: 5px;
    bottom: 4px;
    border-style: solid;
    border-width: 0 0 4px 4px;
    border-color: transparent transparent #bdbdbd transparent;
}

.tool.selected {
    background: #393939;
    border-radius: 3px;
    margin: 0 3px;
}

.tool.selected::after {
    right: 2px;
}

.tool-screen {
    margin-top: -2px;
}

.tool-last {
    margin-top: 4px;
}

.gradient-swatch {
    width: 16px;
    height: 13px;
    border: 1px solid #ddd;
    background: linear-gradient(90deg, #333, #d8d8d8);
}

.rect-swatch {
    width: 16px;
    height: 13px;
    border: 1px solid #ddd;
    background: #757575;
}

.type-t {
    font-family: "Liberation Serif", serif;
    font-size: 20px;
    line-height: 18px;
    -webkit-text-stroke: 0.4px #eee;
    color: #eee;
}

.type-t.small {
    width: 9px;
    font-weight: 700;
    font-size: 14px;
    line-height: 12px;
    -webkit-text-stroke: 0;
    color: #8c8c8c;
}

.swatches {
    height: 56px;
    margin-top: -4px;
    margin-bottom: 4px;
    position: relative;
}

.swatches i {
    position: absolute;
    display: block;
    border: 1px solid #fff;
}

.mini-bg { left: 5px; top: 5px; width: 9px; height: 9px; background: #fff; border-color: #111 !important; }
.mini-fg { left: 2px; top: 1px; width: 9px; height: 9px; background: #000; border-color: #ccc !important; }
.big-bg { left: 13px; top: 37px; width: 19px; height: 19px; background: #fff; border-color: #222 !important; }
.big-fg { left: 4px; top: 27px; width: 19px; height: 19px; background: #000; }

.swap {
    position: absolute;
    left: 22px;
    top: 6px;
}

.canvas {
    flex: 1;
    margin-left: 2px;
    background: #262626;
}

/* dock */
.dock {
    width: 325px;
    margin-left: 2px;
    flex: none;
    display: flex;
    flex-direction: column;
}

.dock-body {
    flex: 1;
    display: flex;
    min-height: 0;
}

.icon-col {
    width: 38px;
    flex: none;
    border-left: 1px solid #444;
    border-right: 1px solid #353535;
}

.icon-box {
    height: 69px;
    border-bottom: 1px solid #353535;
    display: flex;
    flex-direction: column;
    align-items: center;
}

.ib-first {
    margin-top: 1px;
}

.ib-second {
    margin-top: 11px;
}

.panels {
    flex: 1;
    margin-left: 1px;
    display: flex;
    flex-direction: column;
    min-width: 0;
}

.panel {
    display: flex;
    flex-direction: column;
    border: 1px solid #383838;
    border-right: 0;
}

.panel-color {
    height: 164px;
    margin-bottom: 2px;
}

.panel-props {
    height: 366px;
    margin-bottom: 3px;
}

.panel-layers {
    height: 421px;
}

.panel-tabs {
    height: 27px;
    flex: none;
    display: flex;
    align-items: stretch;
    background: #424242;
    border-bottom: 1px solid #333;
    padding-left: 0;
    color: #989898;
    font-size: 11.5px;
}

.panel-tabs span {
    line-height: 25px;
    text-align: center;
    border-right: 1px solid #333;
    white-space: nowrap;
}

.panel-tabs .wide {
    font-size: 12.5px;
    letter-spacing: 1.6px;
}

.panel-tabs .active {
    height: 27px;
    background: #535353;
    color: #e8e8e8;
    font-weight: 600;
}

.t-39 { width: 39px; }
.t-40 { width: 40px; }
.t-51 { width: 51px; }
.t-65 { width: 65px; }
.t-73 { width: 73px; }
.t-84 { width: 84px; }

.burger {
    margin: 10px 6px 0 auto;
    width: 10px;
    height: 7px;
    flex: none;
    border-top: 1px solid #ccc;
    border-bottom: 1px solid #ccc;
    background: linear-gradient(#ccc, #ccc) center / 100% 1px no-repeat;
}

.color-body {
    flex: 1;
    display: flex;
    padding: 7px 0 0 9px;
}

.fg-bg {
    width: 30px;
    height: 30px;
    margin-top: 3px;
    position: relative;
    flex: none;
}

.fg-bg i {
    position: absolute;
    display: block;
    width: 20px;
    height: 20px;
}

.c-bg { left: 10px; top: 10px; background: #fff; border: 1px solid #222; }
.c-fg { left: 0; top: 0; background: #000; border: 1px solid #fff; outline: 1px solid #777; }

.color-field {
    width: 187px;
    height: 107px;
    margin-left: 6px;
    position: relative;
    overflow: hidden;
    background: linear-gradient(to top, #000, transparent), linear-gradient(to right, #fff, #f00);
}

.field-mark {
    position: absolute;
    left: -5px;
    bottom: -5px;
    width: 10px;
    height: 10px;
    border: 1px solid #fff;
    border-radius: 50%;
}

.hue-wrap {
    margin-left: 7px;
    display: flex;
    align-items: flex-end;
    height: 107px;
}

.hue {
    width: 19px;
    height: 107px;
    margin-left: 2px;
    background: linear-gradient(#f00, #f0f 17%, #00f 33%, #0ff 50%, #0f0 67%, #ff0 83%, #f00);
}

.hue-mark {
    width: 8px;
    height: 8px;
    margin-bottom: -3px;
    background: #e8e8e8;
    clip-path: polygon(0 0, 100% 50%, 0 100%);
}

.props-head {
    height: 34px;
    flex: none;
    line-height: 36px;
    padding-left: 10px;
    border-bottom: 1px solid #3a3a3a;
    color: #d0d0d0;
    font-size: 12.5px;
}

.props-body {
    flex: 1;
    display: flex;
    justify-content: flex-end;
}

.scroll-track {
    width: 17px;
    height: 276px;
    background: #4a4a4a;
}

.layer-row {
    flex: none;
    display: flex;
    align-items: center;
    border-bottom: 1px solid #444;
    color: #858585;
}

.row-filter { height: 32px; padding: 6px 0 0 3px; }
.row-blend { height: 29px; padding: 1px 0 0 3px; }
.row-lock { height: 31px; border-bottom: 0; }

.sel {
    height: 22px;
    display: flex;
    align-items: center;
    border: 1px solid #626262;
    border-radius: 4px;
    color: #7e7e7e;
    flex: none;
}

.sel-arrow {
    margin-left: auto;
    margin-right: 3px;
}

.sel-kind {
    width: 85px;
    padding-left: 8px;
    gap: 4px;
}

.sel-blend {
    width: 117px;
    padding-left: 10px;
}

.filter-icons {
    display: flex;
    align-items: center;
    margin-left: 18px;
    gap: 13px;
}

.filter-toggle {
    width: 8px;
    height: 17px;
    margin-left: 3px;
    background: #4a4a4a;
    border-radius: 4px;
}

.filter-toggle i {
    display: block;
    width: 8px;
    height: 8px;
    border-radius: 50%;
    background: #8c8c8c;
}

.layer-label {
    white-space: nowrap;
}

.opacity-label {
    margin-left: 9px;
}

.lock-label {
    margin-left: 8px;
}

.num-input {
    width: 54px;
    height: 22px;
    margin-left: auto;
    margin-right: 46px;
    display: flex;
    align-items: center;
    flex: none;
    border: 1px solid #626262;
    border-radius: 3px;
}

.num-input i {
    width: 33px;
    height: 18px;
    margin-left: 2px;
    background: #464646;
}

.num-input svg {
    margin-left: 6px;
}

.lock-icons {
    display: flex;
    align-items: center;
    gap: 9px;
    margin-left: 13px;
}

.fill-label {
    margin-left: 11px;
}

.layer-list {
    flex: 1;
    background: #505050;
}

.layer-foot {
    height: 25px;
    flex: none;
    display: flex;
    align-items: center;
    justify-content: flex-end;
    gap: 15px;
    padding-right: 29px;
    border-top: 1px solid #3a3a3a;
    color: #858585;
}

.fx {
    font-family: "Liberation Serif", serif;
    font-style: italic;
    font-size: 14px;
}

/* dropdown */
.view-menu {
    position: absolute;
    left: 399px;
    top: 23px;
    width: 220px;
    padding: 3px 2px 2px 2px;
    background: #f0f0f0;
    border: 1px solid #a0a0a0;
    box-shadow: 2px 2px 3px rgba(0, 0, 0, 0.5);
    color: #808080;
    font-size: 13px;
    z-index: 5;
}

.mi {
    height: 19px;
    display: flex;
    align-items: center;
    justify-content: space-between;
    padding: 0 16px 1px;
    position: relative;
    white-space: nowrap;
}

.mi.on {
    color: #000;
}

.mi kbd {
    font: inherit;
}

.mi.sub::after {
    content: "";
    position: absolute;
    right: 5px;
    top: 5px;
    border-style: solid;
    border-width: 4px 0 4px 4px;
    border-color: transparent transparent transparent #7a7a7a;
}

.mi.on.sub::after {
    border-left-color: #000;
}

.view-menu hr {
    height: 1px;
    margin: 5px 1px 5px 0;
    border: 0;
    background: #bdbdbd;
}

.view-menu hr.first {
    margin-top: 4px;
}

/* ---- taskbar ---- */
.taskbar {
    height: 48px;
    flex: none;
    display: flex;
    align-items: center;
    position: relative;
    padding: 0 0 2px 617px;
    margin-right: 2px;
    background: linear-gradient(90deg, #d4e8c8 0, #d8e8c0 610px, #e4edb0 980px, #f6e6cf 1110px, #fbf1ea 1290px, #d6f3ef 1500px, #b9ecea 1924px);
    border-bottom: 1px solid #555;
    border-top: 1px solid #aab39c;
}

.search {
    width: 218px;
    height: 31px;
    margin-left: 14px;
    display: flex;
    align-items: center;
    gap: 10px;
    padding-left: 10px;
    background: #f5f8e4;
    border: 1px solid #c9d6a6;
    border-radius: 16px;
    color: #444;
    font-size: 13px;
}

.tb-task { margin-left: 13px; }
.tb-gear { margin-left: 19px; }
.tb-edge { margin-left: 20px; }
.tb-chrome { margin-left: 19px; }
.tb-whale { margin-left: 21px; }
.tb-folder { margin-left: 22px; }

.tb-app {
    width: 174px;
    height: 38px;
    margin-left: 13px;
    display: flex;
    align-items: center;
    gap: 9px;
    padding-left: 8px;
    position: relative;
    background: rgba(255, 255, 255, 0.55);
    border-radius: 4px;
    font-size: 11.5px;
    color: #222;
}

.ps-big {
    width: 22px;
    height: 22px;
    background: #001e36;
    color: #31a8ff;
    border-radius: 4px;
    font-family: "Liberation Sans", sans-serif;
    font-weight: 700;
    font-size: 13px;
    line-height: 22px;
    text-align: center;
}

.running {
    position: absolute;
    left: 12px;
    bottom: 0;
    width: 15px;
    height: 3px;
    border-radius: 2px;
    background: #8a8a8a;
}

.tray {
    margin-left: auto;
    display: flex;
    align-items: center;
    padding-right: 21px;
    color: #1a1a1a;
}

.tray-usb { margin-left: 22px; }
.tray-a {
    margin-left: 20px;
    font-weight: 300;
    font-size: 18px;
    line-height: 20px;
}
.tray-mon { margin-left: 19px; }
.tray-vol { margin-left: 6px; }

.clock {
    margin-left: 16px;
    display: flex;
    flex-direction: column;
    align-items: flex-end;
    font-size: 12px;
    line-height: 16px;
}

.tray-bell { margin-left: 8px; }

.status-bar {
    height: 22px;
    flex: none;
    display: flex;
    align-items: center;
    padding: 0 0 2px 2px;
    margin-right: 2px;
    background: #e4e5e6;
    color: #1a1a1a;
    font-size: 13px;
}

.status-icons {
    margin-left: auto;
    display: flex;
    align-items: center;
    gap: 7px;
}

.st-icon {
    position: relative;
}

.dot {
    position: absolute;
    right: -2px;
    bottom: -1px;
    width: 5px;
    height: 5px;
    border-radius: 50%;
}

.dot.teal { background: #22d3c5; }
.dot.green { background: #7cc520; }

.st-sep {
    width: 1px;
    height: 16px;
    background: #999;
}

.st-note {
    margin-left: 2px;
}

.grip-corner {
    margin-left: 4px;
}
```
